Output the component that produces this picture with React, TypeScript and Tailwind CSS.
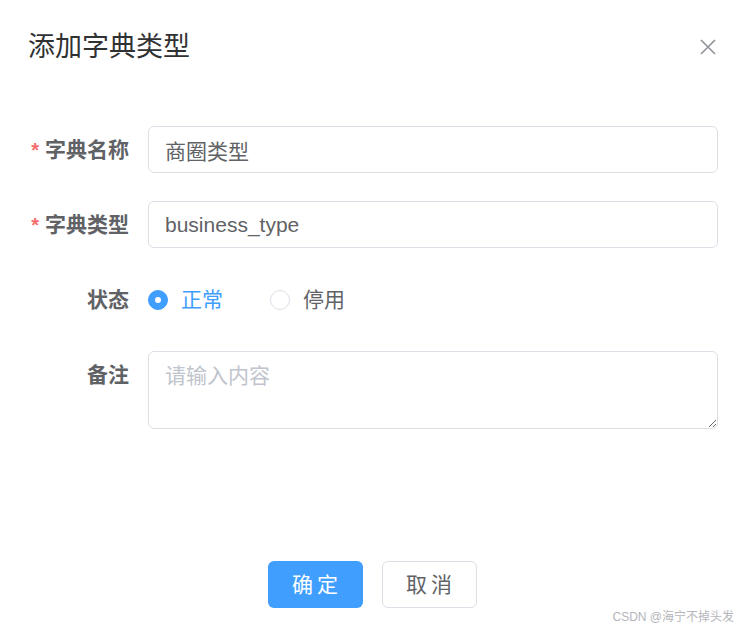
import { useState } from 'react'

const FONT = { fontFamily: '"Liberation Sans", "Noto Sans CJK SC", sans-serif' }

function Field({ label, required, children }: { label: string; required?: boolean; children: React.ReactNode }) {
  return (
    <div className="flex items-start">
      <div className="w-[120px] shrink-0 h-[47px] flex items-center justify-end pr-[19px] text-[21px] font-bold text-[#606266]">
        {required && <span className="text-[#f56c6c] mr-[6px] text-[20px]">*</span>}
        {label}
      </div>
      <div className="flex-1">{children}</div>
    </div>
  )
}

function Radio({ checked, label, onClick }: { checked: boolean; label: string; onClick: () => void }) {
  return (
    <button className="flex items-center gap-[13px]" onClick={onClick}>
      <span
        className={
          checked
            ? 'w-[20px] h-[20px] rounded-full bg-[#409eff] border border-[#409eff] flex items-center justify-center'
            : 'w-[20px] h-[20px] rounded-full bg-white border border-[#dcdfe6]'
        }
      >
        {checked && <span className="w-[6px] h-[6px] rounded-full bg-white" />}
      </span>
      <span className={checked ? 'text-[21px] text-[#409eff]' : 'text-[21px] text-[#606266]'}>{label}</span>
    </button>
  )
}

export default function App() {
  const [status, setStatus] = useState(0)

  return (
    <div className="w-[744px] h-[631px] bg-white relative flex flex-col" style={FONT}>
      {/* 标题 */}
      <div className="flex items-center justify-between pt-[30px] pl-[28px] pr-[27px]">
        <span className="text-[27px] leading-[34px] text-[#303133]">添加字典类型</span>
        <svg width="18" height="18" viewBox="0 0 18 18" className="text-[#909399]">
          <path d="M2 2 L16 16 M16 2 L2 16" stroke="currentColor" strokeWidth="1.6" />
        </svg>
      </div>

      {/* 表单 */}
      <div className="flex flex-col gap-[28px] mt-[62px] pl-[28px] pr-[26px]">
        <Field label="字典名称" required>
          <input
            defaultValue="商圈类型"
            className="w-full h-[47px] border border-[#dcdfe6] rounded-[6px] px-4 text-[21px] text-[#606266] outline-none"
          />
        </Field>
        <Field label="字典类型" required>
          <input
            defaultValue="business_type"
            className="w-full h-[47px] border border-[#dcdfe6] rounded-[6px] px-4 text-[21px] text-[#606266] outline-none"
          />
        </Field>
        <Field label="状态">
          <div className="h-[47px] flex items-center gap-[47px]">
            <Radio checked={status === 0} label="正常" onClick={() => setStatus(0)} />
            <Radio checked={status === 1} label="停用" onClick={() => setStatus(1)} />
          </div>
        </Field>
        <Field label="备注">
          <textarea
            placeholder="请输入内容"
            className="w-full h-[78px] block border border-[#dcdfe6] rounded-[6px] px-4 py-[8px] text-[21px] leading-[31px] text-[#606266] placeholder:text-[#c0c4cc] outline-none"
          />
        </Field>
      </div>

      {/* 底部按钮 */}
      <div className="flex justify-center gap-[19px] mt-auto mb-[23px]">
        <button className="w-[95px] h-[47px] rounded-[6px] bg-[#409eff] text-white text-[21px] tracking-[4px] pl-[4px]">
          确定
        </button>
        <button className="w-[95px] h-[47px] rounded-[6px] border border-[#dcdfe6] bg-white text-[#606266] text-[21px] tracking-[4px] pl-[4px]">
          取消
        </button>
      </div>

      <span className="absolute right-[10px] bottom-[5px] text-[12px] text-[#b4b6ba]">CSDN @海宁不掉头发</span>
    </div>
  )
}
